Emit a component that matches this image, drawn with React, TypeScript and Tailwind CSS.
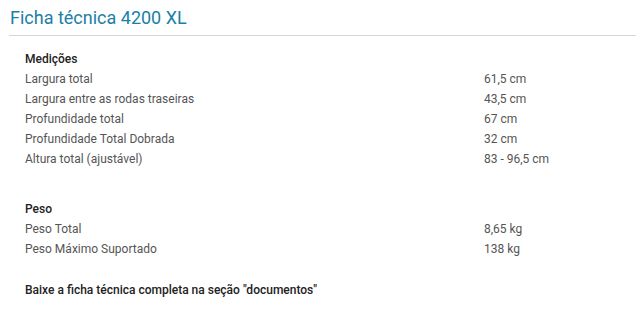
import React from "react";

const medicoes: [string, string][] = [
  ["Largura total", "61,5 cm"],
  ["Largura entre as rodas traseiras", "43,5 cm"],
  ["Profundidade total", "67 cm"],
  ["Profundidade Total Dobrada", "32 cm"],
  ["Altura total (ajustável)", "83 - 96,5 cm"],
];

const peso: [string, string][] = [
  ["Peso Total", "8,65 kg"],
  ["Peso Máximo Suportado", "138 kg"],
];

function Row({ label, value }: { label: string; value: string }) {
  return (
    <div className="flex h-[20px] items-center text-[12px] text-[#555]">
      <div className="w-[459px]">{label}</div>
      <div>{value}</div>
    </div>
  );
}

export default function App() {
  return (
    <div
      className="w-[636px] h-[312px] bg-white overflow-hidden"
      style={{ fontFamily: "Roboto, 'Liberation Sans', sans-serif" }}
    >
      <div className="pl-[9px]">
        <div className="h-[36px] pl-[1px] pt-[7px] text-[18px] leading-[22px] text-[#1a80a6] border-b border-[#d6d6d6]">
          Ficha técnica 4200 XL
        </div>
      </div>
      <div className="pl-[25px] pt-[13px]">
        <div className="flex h-[20px] items-center text-[12px] font-medium text-[#222]">Medições</div>
        {medicoes.map(([l, v]) => (
          <Row key={l} label={l} value={v} />
        ))}
        <div className="h-[30px]" />
        <div className="flex h-[20px] items-center text-[12px] font-medium text-[#222]">Peso</div>
        {peso.map(([l, v]) => (
          <Row key={l} label={l} value={v} />
        ))}
        <div className="h-[21px]" />
        <div className="flex h-[20px] items-center text-[12px] font-medium text-[#222]">
          Baixe a ficha técnica completa na seção "documentos"
        </div>
      </div>
    </div>
  );
}
